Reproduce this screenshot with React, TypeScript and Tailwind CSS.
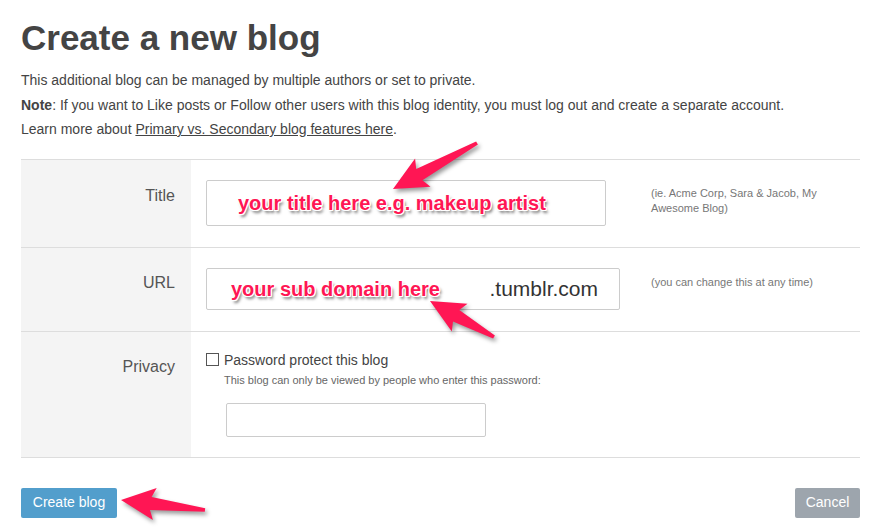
import React from "react";

// arrow polygon from tail (tx,ty) to tip (px,py)
function arrowPoints(tx: number, ty: number, px: number, py: number) {
  const len = Math.hypot(px - tx, py - ty);
  const dx = (px - tx) / len;
  const dy = (py - ty) / len;
  const nx = -dy;
  const ny = dx;
  const headLen = 30;
  const headW = 16;
  const shaftHead = 6.5;
  const shaftTail = 1.8;
  const bx = px - dx * headLen;
  const by = py - dy * headLen;
  const pts = [
    [px, py],
    [bx - dx * 4 + nx * headW, by - dy * 4 + ny * headW],
    [bx + nx * shaftHead, by + ny * shaftHead],
    [tx + nx * shaftTail, ty + ny * shaftTail],
    [tx - nx * shaftTail, ty - ny * shaftTail],
    [bx - nx * shaftHead, by - ny * shaftHead],
    [bx - dx * 4 - nx * headW, by - dy * 4 - ny * headW],
  ];
  return pts.map((p) => p[0].toFixed(1) + "," + p[1].toFixed(1)).join(" ");
}

function Annotation({ children }: { children: React.ReactNode }) {
  return (
    <span className="font-bold text-[20px] text-[#ff1654] [text-shadow:1px_1px_0_#fff,-1px_-1px_0_#fff,1px_-1px_0_#fff,-1px_1px_0_#fff,0_1px_0_#fff,1px_0_0_#fff,2px_3px_3px_rgba(0,0,0,0.55)]">
      {children}
    </span>
  );
}

export default function App() {
  return (
    <div className="relative w-[870px] h-[531px] bg-white font-['Liberation_Sans',Arial,sans-serif] text-[#444] overflow-hidden">
      <div className="pl-[21px] pr-[10px] pt-[18px]">
        <h1 className="text-[35px] leading-[40px] font-bold text-[#444]">
          Create a new blog
        </h1>
        <div className="mt-[10px] text-[14px] leading-[24.5px]">
          <p>This additional blog can be managed by multiple authors or set to private.</p>
          <p>
            <b>Note</b>: If you want to Like posts or Follow other users with this blog identity, you must log out and create a separate account.
          </p>
          <p>
            Learn more about <span className="underline">Primary vs. Secondary blog features here</span>.
          </p>
        </div>

        <div className="mt-[17px] border-t border-[#ddd]">
          {/* Title */}
          <div className="grid grid-cols-[170px_1fr] border-b border-[#ddd]">
            <div className="bg-[#f4f4f4] text-right pr-[16px] pt-[26px] text-[16px] leading-[20px] text-[#555]">
              Title
            </div>
            <div className="pl-[15px] pt-[20px] pb-[21px] grid grid-cols-[445px_175px]">
              <div className="w-[400px] h-[46px] border border-[#ccc] rounded-[2px] flex items-center pl-[31px]">
                <Annotation>your title here e.g. makeup artist</Annotation>
              </div>
              <div className="mt-[6px] text-[11px] leading-[15px] text-[#777]">
                (ie. Acme Corp, Sara &amp; Jacob, My Awesome Blog)
              </div>
            </div>
          </div>

          {/* URL */}
          <div className="grid grid-cols-[170px_1fr] border-b border-[#ddd]">
            <div className="bg-[#f4f4f4] text-right pr-[16px] pt-[25px] text-[16px] leading-[20px] text-[#555]">
              URL
            </div>
            <div className="pl-[15px] pt-[20px] pb-[21px] grid grid-cols-[445px_175px]">
              <div className="w-[414px] h-[42px] border border-[#ccc] rounded-[2px] flex items-center pl-[24px] pr-[21px]">
                <Annotation>your sub domain here</Annotation>
                <span className="ml-auto text-[21px] text-[#333]">.tumblr.com</span>
              </div>
              <div className="mt-[7px] text-[11px] leading-[15px] text-[#777]">
                (you can change this at any time)
              </div>
            </div>
          </div>

          {/* Privacy */}
          <div className="grid grid-cols-[170px_1fr] border-b border-[#ddd]">
            <div className="bg-[#f4f4f4] text-right pr-[16px] pt-[25px] text-[16px] leading-[20px] text-[#555]">
              Privacy
            </div>
            <div className="pl-[15px] pt-[18px] pb-[20px]">
              <div className="flex items-center gap-[5px] text-[14px] leading-[20px] text-[#444]">
                <span className="w-[13px] h-[13px] border border-[#555] bg-white" />
                Password protect this blog
              </div>
              <div className="mt-[2px] pl-[18px] text-[11px] leading-[16px] text-[#666]">
                This blog can only be viewed by people who enter this password:
              </div>
              <div className="mt-[15px] ml-[20px] w-[260px] h-[34px] border border-[#ccc] rounded-[2px]" />
            </div>
          </div>
        </div>

        <div className="mt-[30px] flex justify-between">
          <button className="h-[30px] w-[96px] bg-[#529ecc] text-white text-[14px] rounded-[2px]">
            Create blog
          </button>
          <button className="h-[30px] w-[65px] bg-[#9da5ad] text-white text-[14px] rounded-[2px]">
            Cancel
          </button>
        </div>
      </div>

      <svg
        className="absolute inset-0 pointer-events-none drop-shadow-[2px_3px_2px_rgba(0,0,0,0.4)]"
        width="870"
        height="531"
        viewBox="0 0 870 531"
      >
        <polygon points={arrowPoints(477, 143, 393, 189)} fill="#ff1654" />
        <polygon points={arrowPoints(494, 337, 430, 301)} fill="#ff1654" />
        <polygon points={arrowPoints(205, 510, 121, 500)} fill="#ff1654" />
      </svg>
    </div>
  );
}
